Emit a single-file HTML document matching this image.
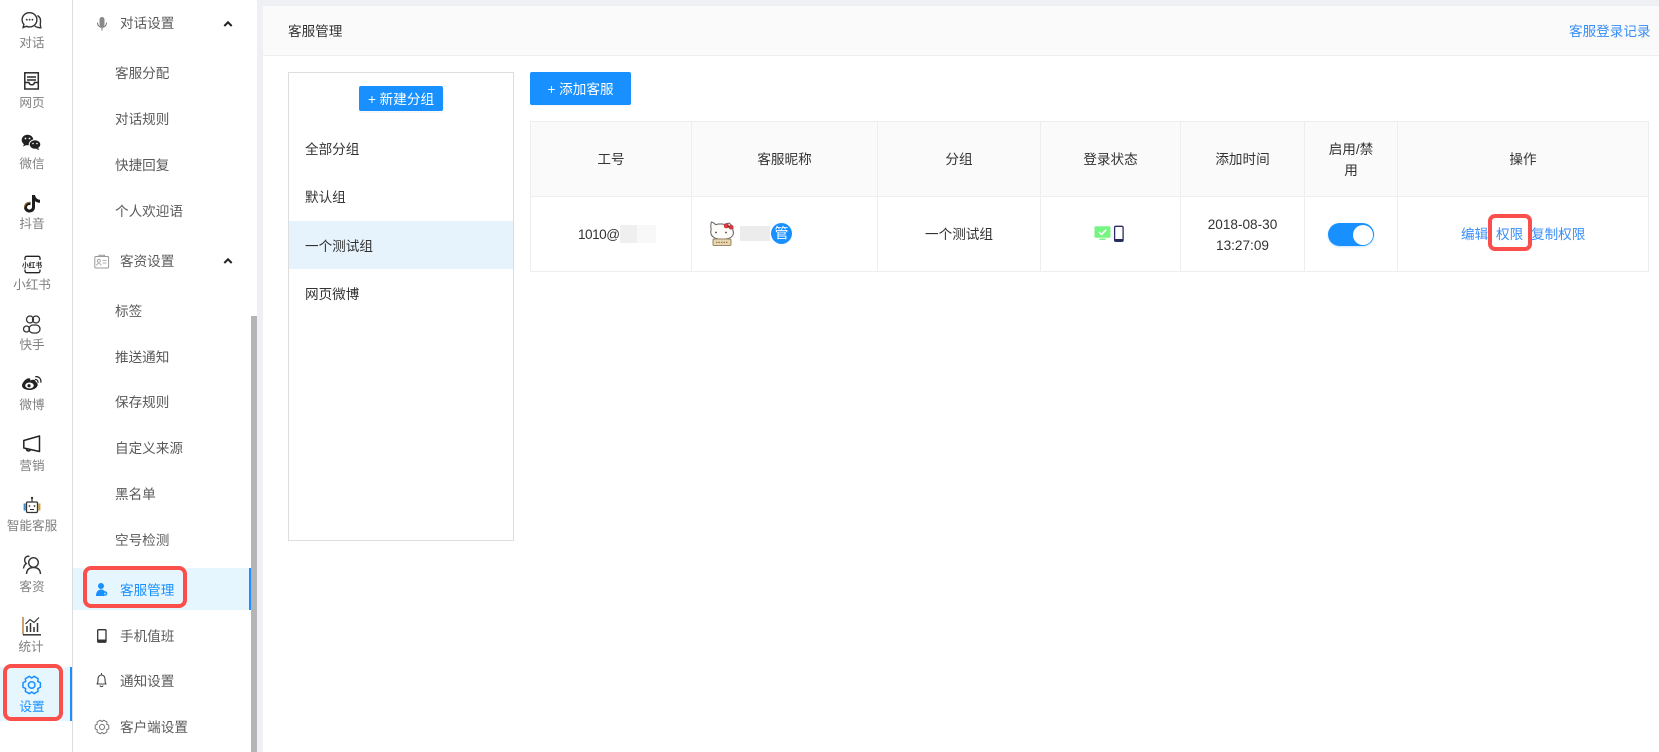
<!DOCTYPE html>
<html lang="zh">
<head>
<meta charset="utf-8">
<title>客服管理</title>
<style>
html,body{margin:0;padding:0;width:1659px;height:752px;overflow:hidden;background:#fff}
body{position:relative;font-family:"Liberation Sans","Noto Sans CJK SC",sans-serif;font-size:13.6px;color:#333}
.b{position:absolute}
.t{position:absolute;height:20px;line-height:20px;white-space:nowrap;margin-top:1px}
.c{text-align:center;margin-top:0}
.r{font-size:12.6px;color:#808080;left:0;width:64px;text-align:center}
.s{color:#5a5a5a;left:115px}
.m{color:#5a5a5a;left:120px}
.h{color:#333;text-align:center}
.l{color:#3a8ef6}
svg{position:absolute;left:0;top:0;overflow:visible}
</style>
</head>
<body>
<!-- backgrounds -->
<div class="b" style="left:263px;top:0;width:1396px;height:6px;background:#eef0f4"></div>
<div class="b" style="left:257px;top:0;width:6px;height:752px;background:#eef0f4"></div>
<div class="b" style="left:72px;top:0;width:1.3px;height:752px;background:#ddd"></div>
<div class="b" style="left:251px;top:316px;width:6px;height:436px;background:#b5b5b5"></div>
<div class="b" style="left:263px;top:6px;width:1396px;height:49px;background:#fafafa;border-bottom:1px solid #eee"></div>

<!-- active states -->
<div class="b" style="left:0;top:667px;width:70px;height:54px;background:#e6f6ff"></div>
<div class="b" style="left:70px;top:667px;width:2px;height:54px;background:#1890ff"></div>
<div class="b" style="left:73px;top:568px;width:176px;height:42px;background:#e6f6ff"></div>
<div class="b" style="left:249px;top:568px;width:2px;height:42px;background:#1890ff"></div>

<!-- rail labels -->
<div class="t r" style="top:32px">对话</div>
<div class="t r" style="top:92px">网页</div>
<div class="t r" style="top:153px">微信</div>
<div class="t r" style="top:213px">抖音</div>
<div class="t r" style="top:274px">小红书</div>
<div class="t r" style="top:334px">快手</div>
<div class="t r" style="top:394px">微博</div>
<div class="t r" style="top:455px">营销</div>
<div class="t r" style="top:515px">智能客服</div>
<div class="t r" style="top:576px">客资</div>
<div class="t r" style="top:636px;left:-1px">统计</div>
<div class="t r" style="top:696px;color:#1890ff">设置</div>

<!-- second menu -->
<div class="t m" style="top:13px">对话设置</div>
<div class="t s" style="top:63px">客服分配</div>
<div class="t s" style="top:109px">对话规则</div>
<div class="t s" style="top:155px">快捷回复</div>
<div class="t s" style="top:201px">个人欢迎语</div>
<div class="t m" style="top:251px">客资设置</div>
<div class="t s" style="top:301px">标签</div>
<div class="t s" style="top:347px">推送通知</div>
<div class="t s" style="top:392px">保存规则</div>
<div class="t s" style="top:438px">自定义来源</div>
<div class="t s" style="top:484px">黑名单</div>
<div class="t s" style="top:530px">空号检测</div>
<div class="t m" style="top:580px;color:#1890ff">客服管理</div>
<div class="t m" style="top:626px">手机值班</div>
<div class="t m" style="top:671px">通知设置</div>
<div class="t m" style="top:717px">客户端设置</div>

<!-- header -->
<div class="t" style="left:288px;top:21px">客服管理</div>
<div class="t l" style="left:1569px;top:21px">客服登录记录</div>

<!-- groups panel -->
<div class="b" style="left:288px;top:72px;width:224px;height:467px;border:1.3px solid #ddd"></div>
<div class="b" style="left:289px;top:221px;width:224px;height:48px;background:#e6f3fd"></div>
<div class="t c" style="left:359px;top:86px;width:84px;height:25px;line-height:27px;background:#1890ff;color:#fff;border-radius:2px;box-shadow:0 2px 0 rgba(0,0,0,.03)">+ 新建分组</div>
<div class="t" style="left:305px;top:139px">全部分组</div>
<div class="t" style="left:305px;top:187px">默认组</div>
<div class="t" style="left:305px;top:236px">一个测试组</div>
<div class="t" style="left:305px;top:284px">网页微博</div>

<!-- add button -->
<div class="t c" style="left:530px;top:72px;width:101px;height:33px;line-height:35px;background:#1890ff;color:#fff;border-radius:2px;box-shadow:0 1px 0 rgba(0,0,0,.04)">+ 添加客服</div>

<!-- table -->
<div class="b" style="left:530px;top:121px;width:1118px;height:75px;background:#fafafa"></div>
<div class="b" style="left:530px;top:121px;width:1117px;height:149px;border:1px solid #eee"></div>
<div class="b" style="left:530px;top:196px;width:1118px;height:1px;background:#eee"></div>
<div class="b" style="left:691px;top:121px;width:1px;height:150px;background:#eee"></div>
<div class="b" style="left:877px;top:121px;width:1px;height:150px;background:#eee"></div>
<div class="b" style="left:1040px;top:121px;width:1px;height:150px;background:#eee"></div>
<div class="b" style="left:1180px;top:121px;width:1px;height:150px;background:#eee"></div>
<div class="b" style="left:1304px;top:121px;width:1px;height:150px;background:#eee"></div>
<div class="b" style="left:1397px;top:121px;width:1px;height:150px;background:#eee"></div>

<div class="t h" style="left:531px;width:160px;top:149px">工号</div>
<div class="t h" style="left:692px;width:185px;top:149px">客服昵称</div>
<div class="t h" style="left:878px;width:162px;top:149px">分组</div>
<div class="t h" style="left:1041px;width:139px;top:149px">登录状态</div>
<div class="t h" style="left:1181px;width:123px;top:149px">添加时间</div>
<div class="t h" style="left:1305px;width:92px;top:139px">启用/禁</div>
<div class="t h" style="left:1305px;width:92px;top:160px">用</div>
<div class="t h" style="left:1398px;width:250px;top:149px">操作</div>

<div class="t" style="left:578px;top:224px;letter-spacing:-.5px">1010@</div>
<div class="b" style="left:620px;top:225px;width:17px;height:18px;background:#efefef"></div>
<div class="b" style="left:637px;top:225px;width:19px;height:18px;background:#f8f8f8"></div>
<div class="b" style="left:740px;top:226px;width:30px;height:15px;background:#ececec"></div>
<div class="b" style="left:771px;top:223px;width:21px;height:21px;border-radius:50%;background:#1890ff;color:#fff;font-size:14px;line-height:21px;text-align:center">管</div>
<div class="t h" style="left:878px;width:162px;top:224px">一个测试组</div>
<div class="t h" style="left:1181px;width:123px;top:214px">2018-08-30</div>
<div class="t h" style="left:1181px;width:123px;top:235px">13:27:09</div>
<div class="b" style="left:1328px;top:223px;width:46px;height:23px;border-radius:12px;background:#1890ff;box-shadow:0 1px 2px rgba(24,144,255,.25)"></div>
<div class="b" style="left:1352.700px;top:224.500px;width:20px;height:20px;border-radius:50%;background:#fff"></div>
<div class="t l" style="left:1461px;top:224px">编辑</div>
<div class="t l" style="left:1496px;top:224px">权限</div>
<div class="t l" style="left:1531px;top:224px">复制权限</div>

<!-- icons -->
<svg width="1659" height="752" viewBox="0 0 1659 752" fill="none">
  <!-- 对话 -->
  <g stroke="#333" stroke-width="1.400">
    <path d="M29.500 12.700c4.200 0 7.400 3.100 7.400 7.100s-3.200 7.100-7.400 7.100c-1.100 0-2.200-.2-3.100-.6l-3.300 1.200.8-3.100c-1.100-1.200-1.800-2.800-1.800-4.600 0-4 3.200-7.100 7.400-7.100z"/>
    <path d="M37.500 15.500c2.300 1.400 3.300 3.800 3 6.300-.2 1.500-.4 2.900 0 4.500l.3 1.500c-2.200 0-4.300-.5-6-1.700"/>
  </g>
  <g fill="#333"><circle cx="26.800" cy="19.700" r=".9"/><circle cx="29.600" cy="19.700" r=".9"/><circle cx="32.400" cy="19.700" r=".9"/></g>
  <!-- 网页 -->
  <g stroke="#2b2b2b" stroke-width="1.500">
    <rect x="24.800" y="72.800" width="13.500" height="16.200"/>
    <path d="M27 77h9M27 80h9M25 82.500h4c.5 3 5 3 5.500 0h4"/>
  </g>
  <!-- 微信 -->
  <g fill="#222">
    <ellipse cx="27.500" cy="140" rx="5.800" ry="5.300"/>
    <path d="M24 144l-1 2.500 3.500-1.500z"/>
    <ellipse cx="35" cy="144.500" rx="5.800" ry="4.800" stroke="#fff" stroke-width="1"/>
    <path d="M38 148l1.500 2-3.500-1z"/>
  </g>
  <g fill="#fff"><circle cx="25.500" cy="138.500" r=".9"/><circle cx="29.500" cy="138.500" r=".9"/><circle cx="33" cy="143.500" r=".8"/><circle cx="37" cy="143.500" r=".8"/></g>
  <!-- 抖音 -->
  <path d="M32 195h3c.4 2.800 2.200 4.500 5 4.800v3c-1.900 0-3.500-.6-5-1.700v6c0 3.500-2.700 5.400-5.500 5.400-3 0-5.500-2.300-5.500-5.300 0-3.200 2.800-5.700 6.500-5.200v3.100c-1.800-.5-3.500.5-3.500 2.100 0 1.300 1.100 2.300 2.500 2.300 1.500 0 2.500-1 2.500-2.600z" fill="#1d1d1d"/>
  <path d="M24.500 207.500c0-3 2.500-5.300 5.500-5.300" stroke="#c8862c" stroke-width=".7"/>
  <!-- 小红书 -->
  <path d="M25 260v-2c0-1 .8-1.700 1.700-1.700h11.600c.9 0 1.700.7 1.700 1.700v2M25 269.500v1.500c0 1 .8 1.700 1.700 1.700h11.600c.9 0 1.700-.7 1.700-1.700v-1.500" stroke="#222" stroke-width="1.300"/>
  <text x="32" y="267.500" text-anchor="middle" font-size="6.700" font-weight="700" fill="#222" font-family="Noto Sans CJK SC, sans-serif">小红书</text>
  <!-- 快手 -->
  <g stroke="#333" stroke-width="1.300">
    <circle cx="30" cy="319.500" r="3.500"/><circle cx="36" cy="319.500" r="3.500"/>
    <circle cx="26.500" cy="329" r="3"/><rect x="29" y="325" width="11" height="8" rx="4"/>
  </g>
  <!-- 微博 -->
  <path d="M33 379.700c3 0 2.500 1.800 2.800 2.100 1.500 1 2.300 2.400 1.700 3.900-1.200 2.800-4.700 4.300-8.200 4.300-4 0-7.300-1.800-7.300-4.500 0-3 4.500-7.700 7.300-7.200 1.500.3.800 1.900 1 2.100.6 0 1.300-.7 2.700-.7z" fill="#222"/>
  <ellipse cx="29.500" cy="385.500" rx="4.300" ry="3" fill="#fff"/>
  <circle cx="29" cy="385.700" r="1.600" fill="#222"/>
  <path d="M35 379.500c1.800-.3 3.300 1.200 2.900 3.200M35.200 376.700c3.800-.7 6.500 2.500 5.500 6" stroke="#222" stroke-width="1.200"/>
  <!-- 营销 -->
  <path d="M23.800 440.500l15.700-4.500v15.500l-15.700-3.500zM26.500 448.500c-.2 3 3.500 3.200 4 .8" stroke="#222" stroke-width="1.500" stroke-linejoin="round"/>
  <!-- 智能客服 -->
  <rect x="26.500" y="502" width="11" height="10.500" rx="1.200" stroke="#333" stroke-width="1.300"/>
  <path d="M32 502v-3" stroke="#333" stroke-width="1.200"/><circle cx="32" cy="498" r="1.200" fill="#333"/>
  <rect x="23.600" y="503.500" width="2.200" height="7" fill="#3b8fd0"/><rect x="38.200" y="503.500" width="2.200" height="7" fill="#c99a48"/>
  <circle cx="29.500" cy="506" r=".9" fill="#333"/><circle cx="34.500" cy="506" r=".9" fill="#333"/><path d="M30 509.500h4" stroke="#333"/>
  <!-- 客资 -->
  <g stroke="#333" stroke-width="1.400">
    <circle cx="33.500" cy="562.500" r="4.800"/>
    <path d="M26.500 574c.3-4.500 3-6.500 7-6.500s6.700 2 7 6.500"/>
    <path d="M29.500 556.500c-3-1-5 1.500-4.800 3.800 0 1.300.6 2.500 1.600 3.200-1.400 1-2.600 2.700-2.800 5"/>
  </g>
  <!-- 统计 -->
  <path d="M23 617v17.500" stroke="#b06f20" stroke-width="1.300"/>
  <path d="M23 634.800h18" stroke="#222" stroke-width="1.300"/>
  <path d="M27 632v-6M30.500 632v-9M34 632v-5M37.500 632v-9" stroke="#333" stroke-width="1.500"/>
  <path d="M25.500 624l4.500-4.500 4 3 5-5" stroke="#333" stroke-width="1.200"/>
  <!-- 设置 gear -->
  <g transform="translate(31.700 685)" stroke="#1890ff" stroke-width="1.500" stroke-linejoin="round">
    <path d="M8.690-2.330L8.690 2.330 6.060 3.500 6.360 6.360 2.330 8.690 0 7-2.330 8.690-6.360 6.360-6.060 3.500-8.690 2.330-8.690-2.330-6.060-3.500-6.360-6.360-2.330-8.690 0-7 2.330-8.690 6.360-6.360 6.060-3.500z"/>
    <circle r="3.300"/>
  </g>

  <!-- 麦克风 -->
  <rect x="99.500" y="17" width="5" height="10" rx="2.500" fill="#888"/>
  <path d="M97.500 22.500c0 6.500 9 6.500 9 0M102 27.500v3" stroke="#777" stroke-width="1"/>
  <!-- chevrons -->
  <path d="M224.300 26l3.700-3.700 3.700 3.700" stroke="#222" stroke-width="2"/>
  <path d="M224.300 263l3.700-3.700 3.700 3.700" stroke="#222" stroke-width="2"/>
  <!-- 客资设置 icon -->
  <rect x="94.800" y="256.500" width="13.800" height="11.500" rx="1" stroke="#999"/>
  <path d="M99 256.500v-1.300h5.500v1.300" stroke="#999"/>
  <circle cx="98.800" cy="260.800" r="1.500" stroke="#999" stroke-width=".8"/>
  <path d="M96.500 265.500c.3-2.500 4.300-2.500 4.600 0M102.500 260.500h4M102.500 263h4" stroke="#999" stroke-width=".8"/>
  <!-- 客服管理 icon -->
  <circle cx="101" cy="586" r="3" fill="#1890ff"/>
  <path d="M96 596c0-4 2-6.500 5-6.500 2 0 3.500.8 4.200 2.500l-1.200 1v3z" fill="#1890ff"/>
  <circle cx="105" cy="593.500" r="2.300" fill="#1890ff"/>
  <circle cx="105" cy="593.500" r=".8" fill="#e6f6ff"/>
  <!-- 手机 -->
  <rect x="97.700" y="629.700" width="8.300" height="12.500" rx="1" stroke="#333" stroke-width="1.300"/>
  <rect x="98" y="639.500" width="7.700" height="3" fill="#333"/>
  <!-- 铃铛 -->
  <g transform="translate(0 -2.500)">
    <path d="M97 686.500c1.200-1.200 1-3 1-5 0-2.300 1.500-4 3.500-4s3.500 1.700 3.500 4c0 2 0 3.800 1 5z" stroke="#444" stroke-width="1.100" stroke-linejoin="round"/>
    <path d="M100 688c.3 1.500 2.700 1.500 3 0" stroke="#444"/><path d="M101.500 677v-1.500" stroke="#444"/>
  </g>
  <!-- 客户端设置 gear -->
  <g transform="translate(102 727) scale(.78)" stroke="#777" stroke-width="1.300" stroke-linejoin="round">
    <path d="M8.690-2.330L8.690 2.330 6.060 3.500 6.360 6.360 2.330 8.690 0 7-2.330 8.690-6.360 6.360-6.060 3.500-8.690 2.330-8.690-2.330-6.060-3.500-6.360-6.360-2.330-8.690 0-7 2.330-8.690 6.360-6.360 6.060-3.500z"/>
    <circle r="3.300"/>
  </g>

  <!-- Hello Kitty -->
  <path d="M711.500 222c1.500.3 3 1.300 4.200 2.700 3-.9 6.500-.9 9.500 0 1-1 2.500-1.500 4-1.500l3.500 3c.4 1.500.4 2.800 0 3.800 1.500 2.600.8 5.800-2.500 7.700-4 2.200-12.500 2.200-16 0-3.200-1.900-4.200-5-3-7.900-.6-2.800-.6-5.500.3-7.800z" fill="#fdfcf9" stroke="#6f6f6f" stroke-width="1.100"/>
  <circle cx="726.300" cy="225.800" r="2.500" fill="#d9363e"/><circle cx="731" cy="227.300" r="2.300" fill="#d9363e"/><circle cx="728.600" cy="226.600" r="1" fill="#7a1f22"/>
  <circle cx="716" cy="232.500" r=".9" fill="#444"/><circle cx="726" cy="232.500" r=".9" fill="#444"/>
  <rect x="713" y="239" width="18" height="6.500" rx="1" fill="#ead6ad" stroke="#7d6a4d" stroke-width=".8"/>
  <path d="M716 242.300h12" stroke="#6a5a40" stroke-width=".9" stroke-dasharray="1.500 1"/>

  <!-- 状态 -->
  <rect x="1094.500" y="226.300" width="16" height="11.500" rx="1" fill="#76f582"/>
  <path d="M1099 232l2.500 2.500 4.800-4.800" stroke="#fff" stroke-width="1.500"/>
  <path d="M1099.500 239.300h6" stroke="#76f582" stroke-width="1.500"/>
  <rect x="1114.600" y="226.300" width="8.500" height="15" rx="1.300" stroke="#2c2a66" stroke-width="1.300"/>
  <rect x="1115" y="239" width="7.700" height="2.500" fill="#23305e"/>
</svg>

<!-- red annotation boxes -->
<div class="b" style="left:3px;top:664px;width:52px;height:49px;border:4px solid #fb4f4b;border-radius:8px"></div>
<div class="b" style="left:83px;top:566px;width:96px;height:34px;border:4px solid #fb4f4b;border-radius:8px"></div>
<div class="b" style="left:1488px;top:214px;width:36px;height:29px;border:4px solid #fb4f4b;border-radius:7px"></div>
</body>
</html>
